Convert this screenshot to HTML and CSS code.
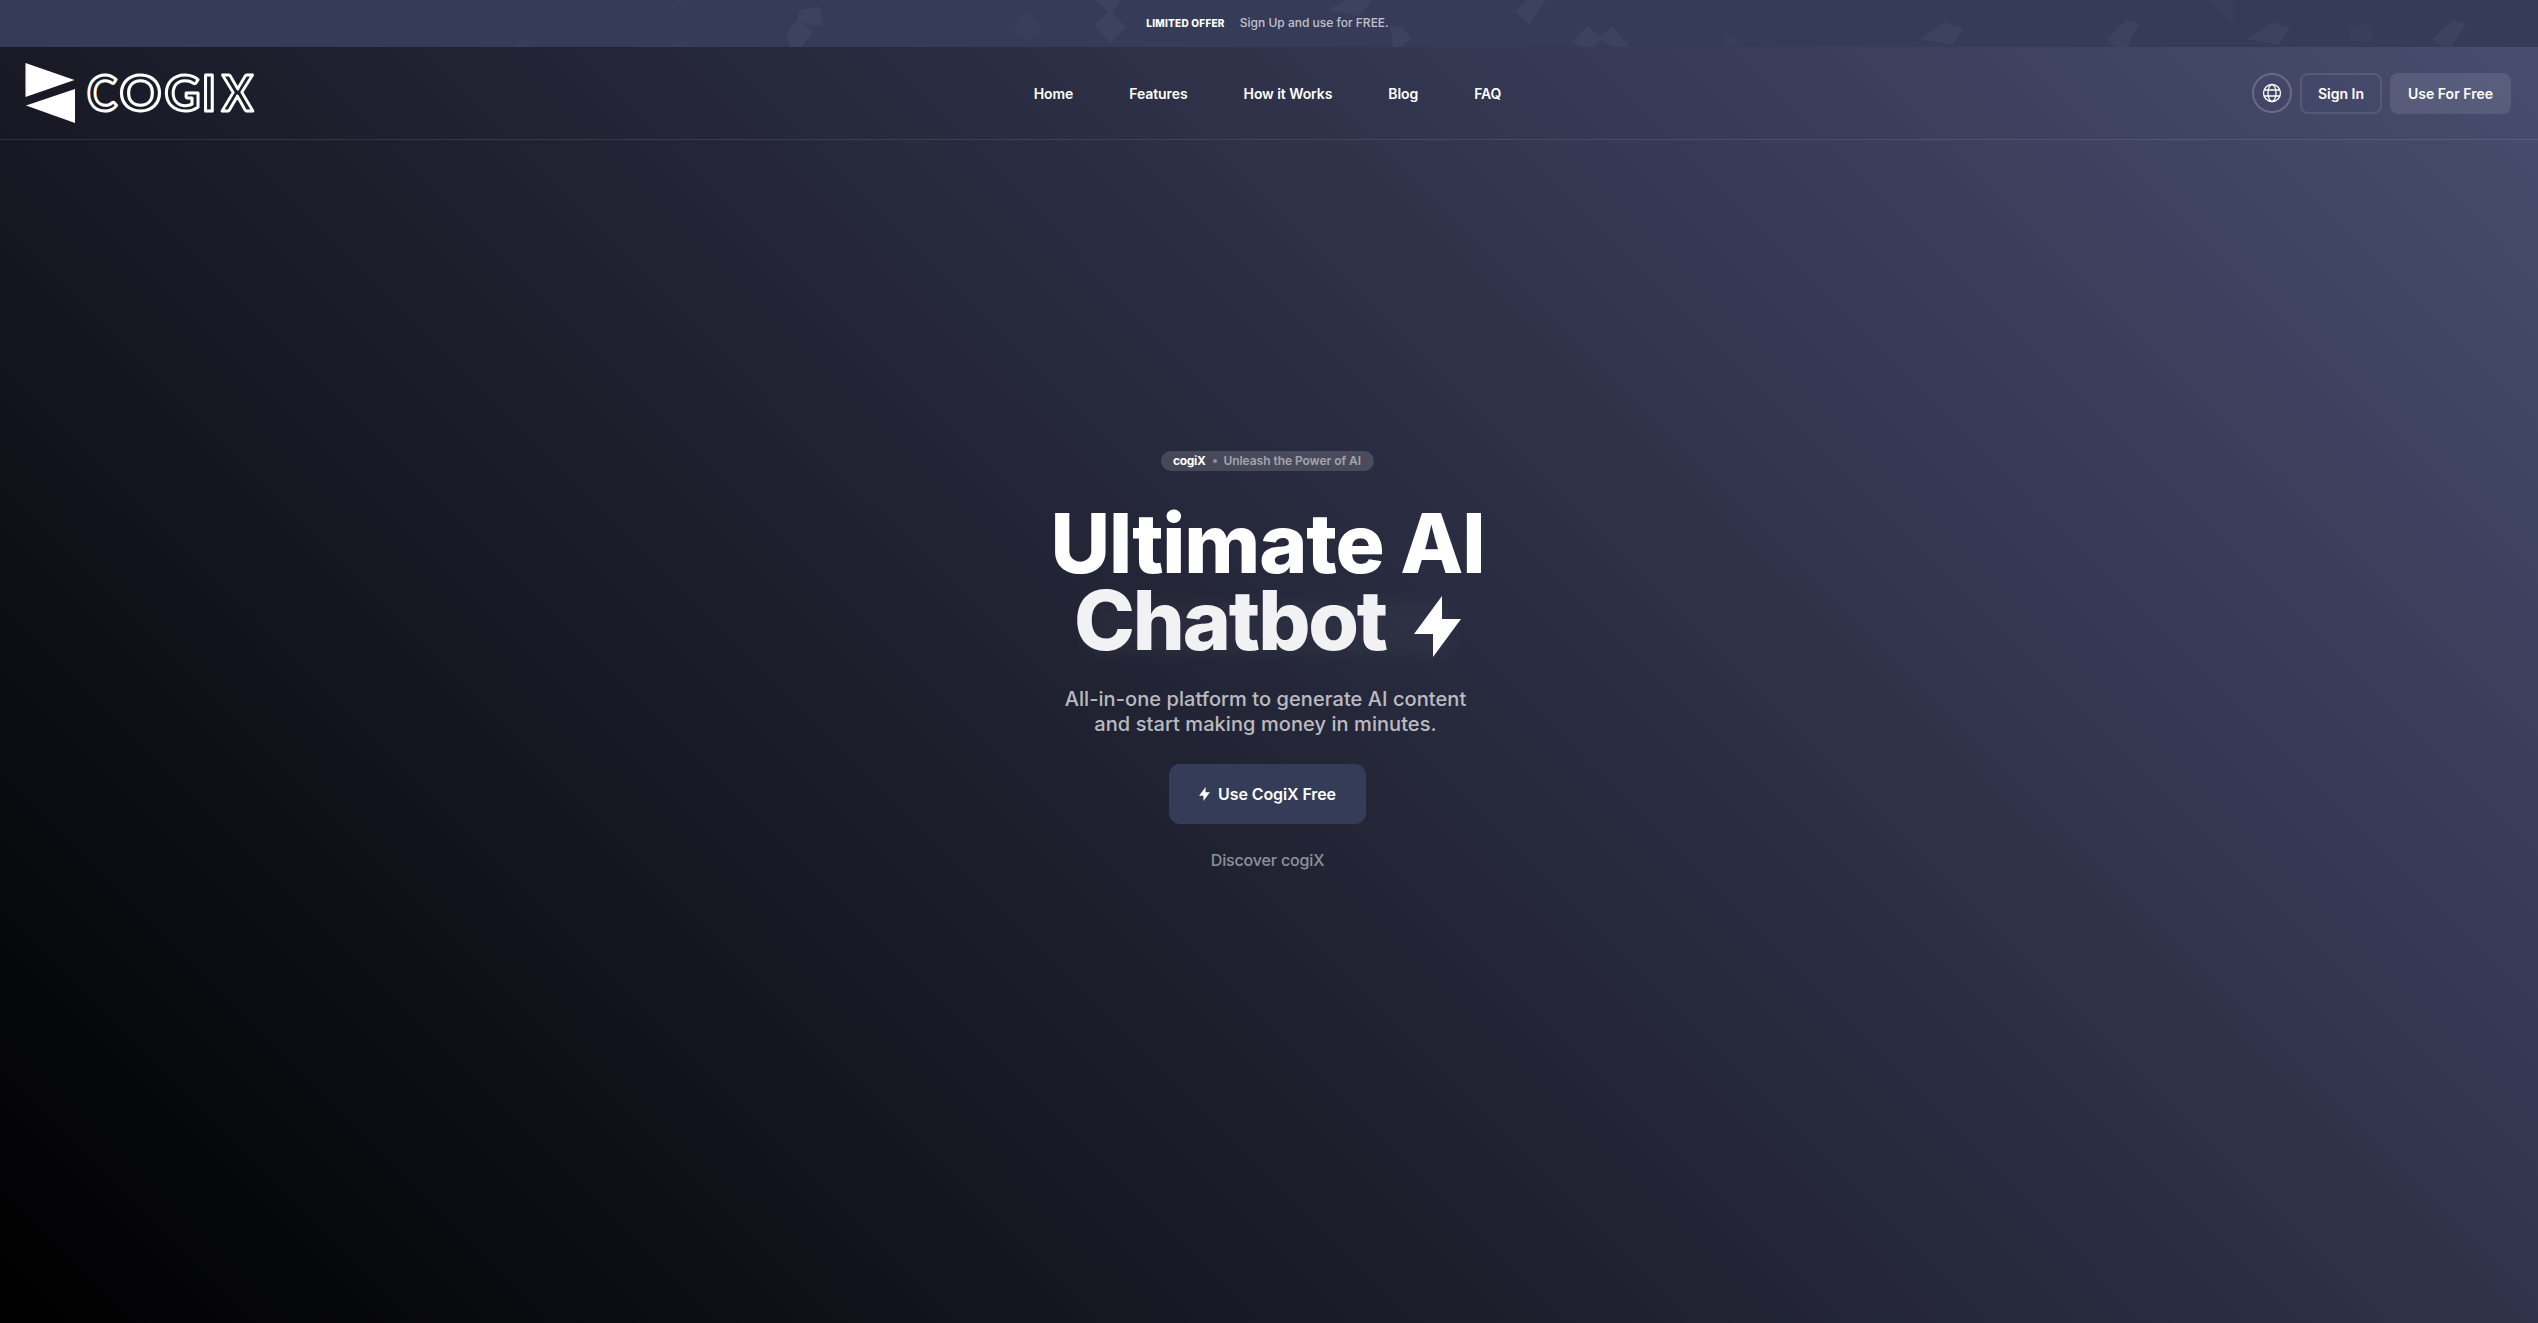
FILE: index.html
```html
<!DOCTYPE html>
<html lang="en">
<head>
    <meta charset="UTF-8">
    <meta name="viewport" content="width=device-width, initial-scale=1.0">
    <title>CogiX - Ultimate AI Chatbot</title>
    <link rel="stylesheet" href="styles.css">
</head>
<body>
    <div class="top-banner">
        <svg class="banner-shapes" width="2538" height="47" viewBox="0 0 2538 47">
            <polygon points="786,34 798,19 813,32 802,47 790,47"/>
            <polygon points="798,10 820,7 823,25 809,25 798,20"/>
            <polygon class="dim" points="1026,11 1043,28 1027,41 1012,27"/>
            <polygon points="1095,0 1120,0 1112,14 1127,27 1110,43 1094,25 1108,12"/>
            <polygon class="dim" points="673,0 680,0 682,6"/>
            <polygon class="dim" points="675,44 683,39 692,47 672,47"/>
            <polygon points="1345,0 1372,0 1359,16 1328,10"/>
            <polygon points="1390,26 1401,27 1411,38 1401,47 1393,47"/>
            <polygon points="1527,0 1546,0 1529,24 1515,11"/>
            <polygon points="1572,41 1588,26 1600,36 1612,26 1630,47 1612,47 1602,40 1595,47 1580,47"/>
            <polygon class="dim" points="1723,33 1744,42 1723,46"/>
            <polygon points="1920,39 1945,22 1964,28 1952,45"/>
            <polygon points="2107,39 2126,20 2139,24 2127,47 2116,47"/>
            <polygon class="dim" points="2208,0 2233,0 2233,24"/>
            <polygon points="2247,39 2272,22 2290,28 2279,45"/>
            <polygon class="dim" points="2348,27 2371,24 2374,43 2350,41"/>
            <polygon points="2433,39 2453,20 2466,24 2451,47 2442,47"/>
            <polygon class="dim" points="510,47 522,40 530,47"/>
            <polygon class="dim" points="184,47 191,42 199,47"/>
        </svg>
        <span class="banner-tag">Limited Offer</span>
        <span class="banner-text">Sign Up and use for FREE.</span>
    </div>
    <main class="page">
        <header class="header">
            <a href="#" class="logo">
                <svg width="230" height="64" viewBox="0 0 230 64">
                    <polygon points="0.5,1 49.5,18 0.5,35"/>
                    <polygon points="50,27 50,61 1,43.5"/>
                    <g class="logo-text">
                        <text x="62" y="49" textLength="30" lengthAdjust="spacingAndGlyphs">C</text>
                        <text x="94.5" y="49" textLength="42" lengthAdjust="spacingAndGlyphs">O</text>
                        <text x="139.5" y="49" textLength="36" lengthAdjust="spacingAndGlyphs">G</text>
                        <text x="176.5" y="49">I</text>
                        <text x="197" y="49" textLength="31" lengthAdjust="spacingAndGlyphs">X</text>
                    </g>
                </svg>
            </a>
            <nav class="nav">
                <a href="#">Home</a>
                <a href="#">Features</a>
                <a href="#">How it Works</a>
                <a href="#">Blog</a>
                <a href="#">FAQ</a>
            </nav>
            <div class="actions">
                <button class="lang-btn" aria-label="Language">
                    <svg width="20" height="20" viewBox="0 0 20 20">
                        <circle cx="10" cy="10" r="8.5"/>
                        <ellipse cx="10" cy="10" rx="4" ry="8.5"/>
                        <path d="M2.2 7h15.6M2.2 13h15.6"/>
                    </svg>
                </button>
                <a href="#" class="btn btn-outline">Sign In</a>
                <a href="#" class="btn btn-light">Use For Free</a>
            </div>
        </header>
        <section class="hero">
            <div class="badge">
                <strong>cogiX</strong>
                <i class="dot"></i>
                <span>Unleash the Power of AI</span>
            </div>
            <h1 class="title">
                <span class="line-one">Ultimate AI</span>
                <span class="line-two">
                    <span class="word">Chatbot</span>
                    <svg class="bolt" width="47" height="61" viewBox="0 0 47 61">
                        <path d="M28 0v23h19L19 61V38H0z"/>
                    </svg>
                </span>
            </h1>
            <p class="subtitle">All-in-one platform to generate AI content<br>and start making money in minutes.</p>
            <a href="#" class="cta">
                <svg width="11" height="14" viewBox="0 0 47 61">
                    <path d="M28 0v23h19L19 61V38H0z"/>
                </svg>
                <span>Use CogiX Free</span>
            </a>
            <a href="#" class="discover">Discover cogiX</a>
        </section>
    </main>
</body>
</html>
```
FILE: styles.css
```css
* {
    margin: 0;
    padding: 0;
    box-sizing: border-box;
}
body {
    font-family: Inter, "Liberation Sans", sans-serif;
    background-color: #000;
    color: #fff;
    height: 100vh;
    overflow: hidden;
    display: flex;
    flex-direction: column;
}
a {
    color: inherit;
    text-decoration: none;
}
svg {
    display: block;
    fill: #fff;
}

/* Top banner */
.top-banner {
    position: relative;
    height: 47px;
    flex: none;
    display: flex;
    align-items: center;
    justify-content: center;
    gap: 15px;
    padding: 0 3px 2px 0;
    background-color: #363c58;
    overflow: hidden;
}
.banner-shapes {
    position: absolute;
    top: 0;
    left: 0;
    fill: rgba(255, 255, 255, 0.035);
}
.banner-shapes .dim {
    fill: rgba(255, 255, 255, 0.014);
}
.banner-tag {
    font-size: 10px;
    font-weight: 800;
    letter-spacing: 0.25px;
    text-transform: uppercase;
}
.banner-text {
    font-size: 12px;
    font-weight: 500;
    color: rgba(255, 255, 255, 0.7);
}

/* Page */
.page {
    flex: 1;
    display: flex;
    flex-direction: column;
    background: linear-gradient(45deg, #000 0%, #484d70 100%);
}
.header {
    height: 93px;
    display: grid;
    grid-template-columns: 1fr auto 1fr;
    align-items: center;
    padding: 0 27px 0 25px;
    border-bottom: 1px solid rgba(255, 255, 255, 0.1);
}
.logo {
    padding-top: 2px;
}
.logo-text {
    font-family: Lato, sans-serif;
    font-size: 50px;
    font-weight: 700;
    fill: none;
    stroke: #fff;
    stroke-width: 3;
    stroke-linejoin: round;
}
.nav {
    display: flex;
    gap: 56px;
    font-size: 14px;
    font-weight: 600;
    letter-spacing: -0.08px;
    padding: 1px 1px 0 0;
}
.actions {
    display: flex;
    justify-content: flex-end;
    gap: 8px;
}
.lang-btn {
    width: 40px;
    height: 40px;
    border: 2px solid rgba(255, 255, 255, 0.2);
    border-radius: 50%;
    background: none;
    display: flex;
    align-items: center;
    justify-content: center;
}
.lang-btn svg {
    fill: none;
    stroke: #fff;
    stroke-width: 1.3;
}
.btn {
    height: 41px;
    display: flex;
    align-items: center;
    justify-content: center;
    border-radius: 8px;
    font-size: 14px;
    font-weight: 600;
    padding-top: 1px;
}
.btn-outline {
    width: 82px;
    border: 2px solid rgba(255, 255, 255, 0.1);
}
.btn-light {
    width: 121px;
    background-color: rgba(255, 255, 255, 0.1);
}

/* Hero */
.hero {
    display: flex;
    flex-direction: column;
    align-items: center;
    padding: 311px 3px 0 0;
}
.badge {
    width: 213px;
    height: 20px;
    border-radius: 10px;
    background-color: rgba(255, 255, 255, 0.15);
    display: flex;
    align-items: center;
    justify-content: space-between;
    padding: 0 13px 1px 12px;
    font-size: 12px;
    font-weight: 600;
    letter-spacing: -0.05px;
    color: rgba(255, 255, 255, 0.5);
}
.badge strong {
    font-weight: 700;
    letter-spacing: -0.3px;
    color: #fff;
}
.dot {
    width: 4px;
    height: 4px;
    border-radius: 50%;
    background-color: rgba(255, 255, 255, 0.4);
}
.title {
    margin-top: 34px;
    font-size: 82px;
    line-height: 77px;
    font-weight: 800;
    display: flex;
    flex-direction: column;
    align-items: center;
}
.line-one {
    letter-spacing: -1.2px;
}
.line-two {
    display: flex;
    align-items: center;
    gap: 28px;
    letter-spacing: -2.2px;
}
.word {
    position: relative;
    color: #f2f2f4;
}
.word::before {
    content: "";
    position: absolute;
    left: 12px;
    right: -65px;
    top: 20px;
    bottom: 4px;
    background-color: rgba(255, 255, 255, 0.03);
    filter: blur(9px);
}
.bolt {
    position: relative;
    margin-top: 11px;
}
.subtitle {
    margin-top: 28px;
    padding-right: 4px;
    font-size: 20px;
    line-height: 25px;
    font-weight: 500;
    letter-spacing: 0.07px;
    text-align: center;
    color: rgba(255, 255, 255, 0.7);
}
.cta {
    margin-top: 27px;
    width: 197px;
    height: 60px;
    border-radius: 11px;
    background-color: #353c58;
    display: flex;
    align-items: center;
    justify-content: center;
    gap: 8px;
    font-size: 16px;
    font-weight: 600;
    letter-spacing: -0.1px;
}
.discover {
    margin-top: 26px;
    font-size: 16px;
    line-height: 20px;
    font-weight: 500;
    letter-spacing: -0.15px;
    color: rgba(255, 255, 255, 0.5);
}
```
